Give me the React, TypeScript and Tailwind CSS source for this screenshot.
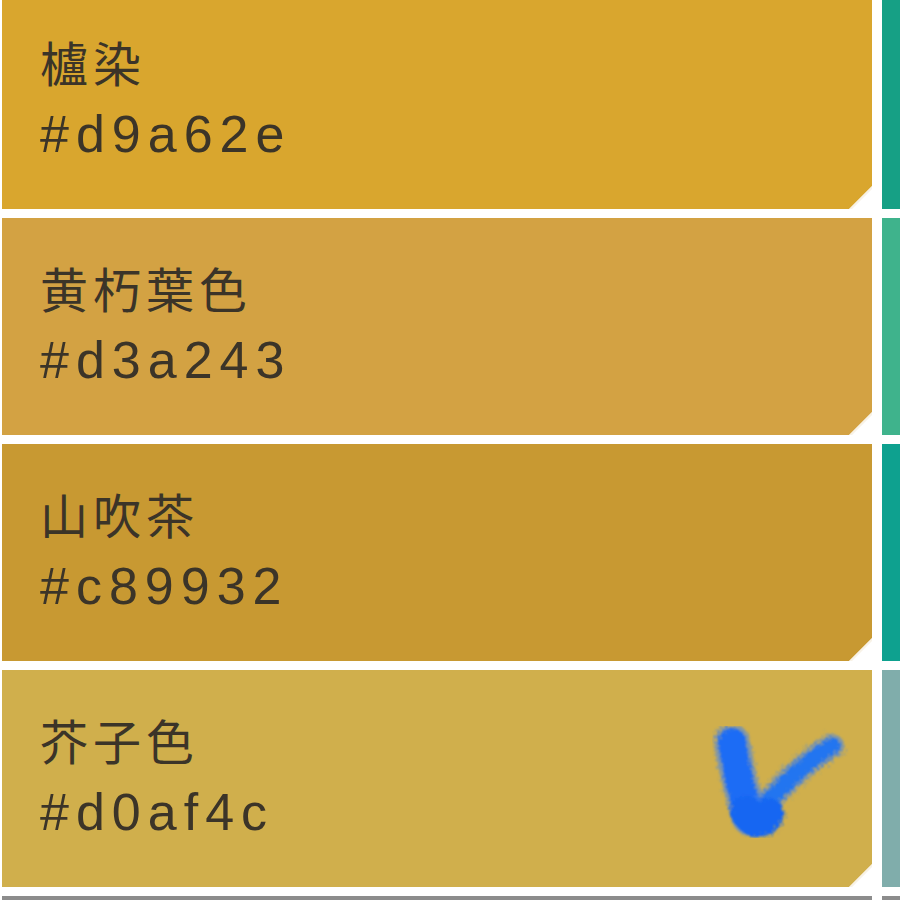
import React from 'react';

interface Swatch {
  name: string;
  hex: string;
  checked?: boolean;
}

const swatches: Swatch[] = [
  { name: '櫨染', hex: '#d9a62e' },
  { name: '黄朽葉色', hex: '#d3a243' },
  { name: '山吹茶', hex: '#c89932' },
  { name: '芥子色', hex: '#d0af4c', checked: true },
  { name: '', hex: '#8c8c8c' },
];

const side = ['#16a085', '#3fb38c', '#0ea18f', '#80adab', '#8c8c8c'];

function Check() {
  return (
    <svg width="140" height="130" viewBox="0 0 140 130" className="absolute right-[22px] bottom-[35px]">
      <defs>
        <filter id="rough" x="-20%" y="-20%" width="140%" height="140%">
          <feTurbulence type="fractalNoise" baseFrequency="0.5" numOctaves="3" result="n" />
          <feDisplacementMap in="SourceGraphic" in2="n" scale="14" />
          <feGaussianBlur stdDeviation="1.2" />
        </filter>
      </defs>
      <g filter="url(#rough)" fill="none" strokeLinecap="round" strokeLinejoin="round">
        <path d="M22 20 C26 45 32 72 40 96" stroke="#4a86e8" strokeWidth="36" opacity="0.6" />
        <path d="M22 20 C26 45 32 72 40 96" stroke="#1a6cf5" strokeWidth="28" />
        <path d="M44 96 C62 76 88 44 122 24" stroke="#4a86e8" strokeWidth="24" opacity="0.6" />
        <path d="M44 96 C62 76 88 44 122 24" stroke="#2474f0" strokeWidth="17" />
        <path d="M36 90 C44 102 52 102 58 92" stroke="#1566f2" strokeWidth="32" />
      </g>
    </svg>
  );
}

function Fold() {
  return (
    <svg width="23" height="23" viewBox="0 0 23 23" className="absolute right-0 bottom-0">
      <polygon points="23,0 23,23 0,23" fill="#ffffff" />
      <polygon points="23,0 0,23 3,23 23,3" fill="#f3ead6" opacity="0.6" />
    </svg>
  );
}

function Card({ s }: { s: Swatch }) {
  return (
    <div className="relative h-[217px] shrink-0" style={{ backgroundColor: s.hex }}>
      <div className="pl-[38px] pt-[42px] text-[#3b3428]">
        <div
          className="text-[48px] leading-[54px] tracking-[5px]"
          style={{ fontFamily: '"Noto Sans CJK JP", "Noto Sans", sans-serif' }}
        >
          {s.name}
        </div>
        <div
          className="mt-[19px] text-[52px] leading-[54px] tracking-[7px]"
          style={{ fontFamily: '"Liberation Sans", Arial, sans-serif' }}
        >
          {s.name ? s.hex : ''}
        </div>
      </div>
      {s.checked && <Check />}
      <Fold />
    </div>
  );
}

export default function App() {
  return (
    <div className="w-[900px] h-[900px] overflow-hidden bg-white">
      <div className="flex gap-[10px] pl-[2px] -mt-[8px]">
        <div className="w-[870px] shrink-0 flex flex-col gap-[9px]">
          {swatches.map((s, i) => (
            <Card key={i} s={s} />
          ))}
        </div>
        <div className="w-[200px] shrink-0 flex flex-col gap-[9px]">
          {side.map((c, i) => (
            <div key={i} className="h-[217px] shrink-0" style={{ backgroundColor: c }} />
          ))}
        </div>
      </div>
    </div>
  );
}
